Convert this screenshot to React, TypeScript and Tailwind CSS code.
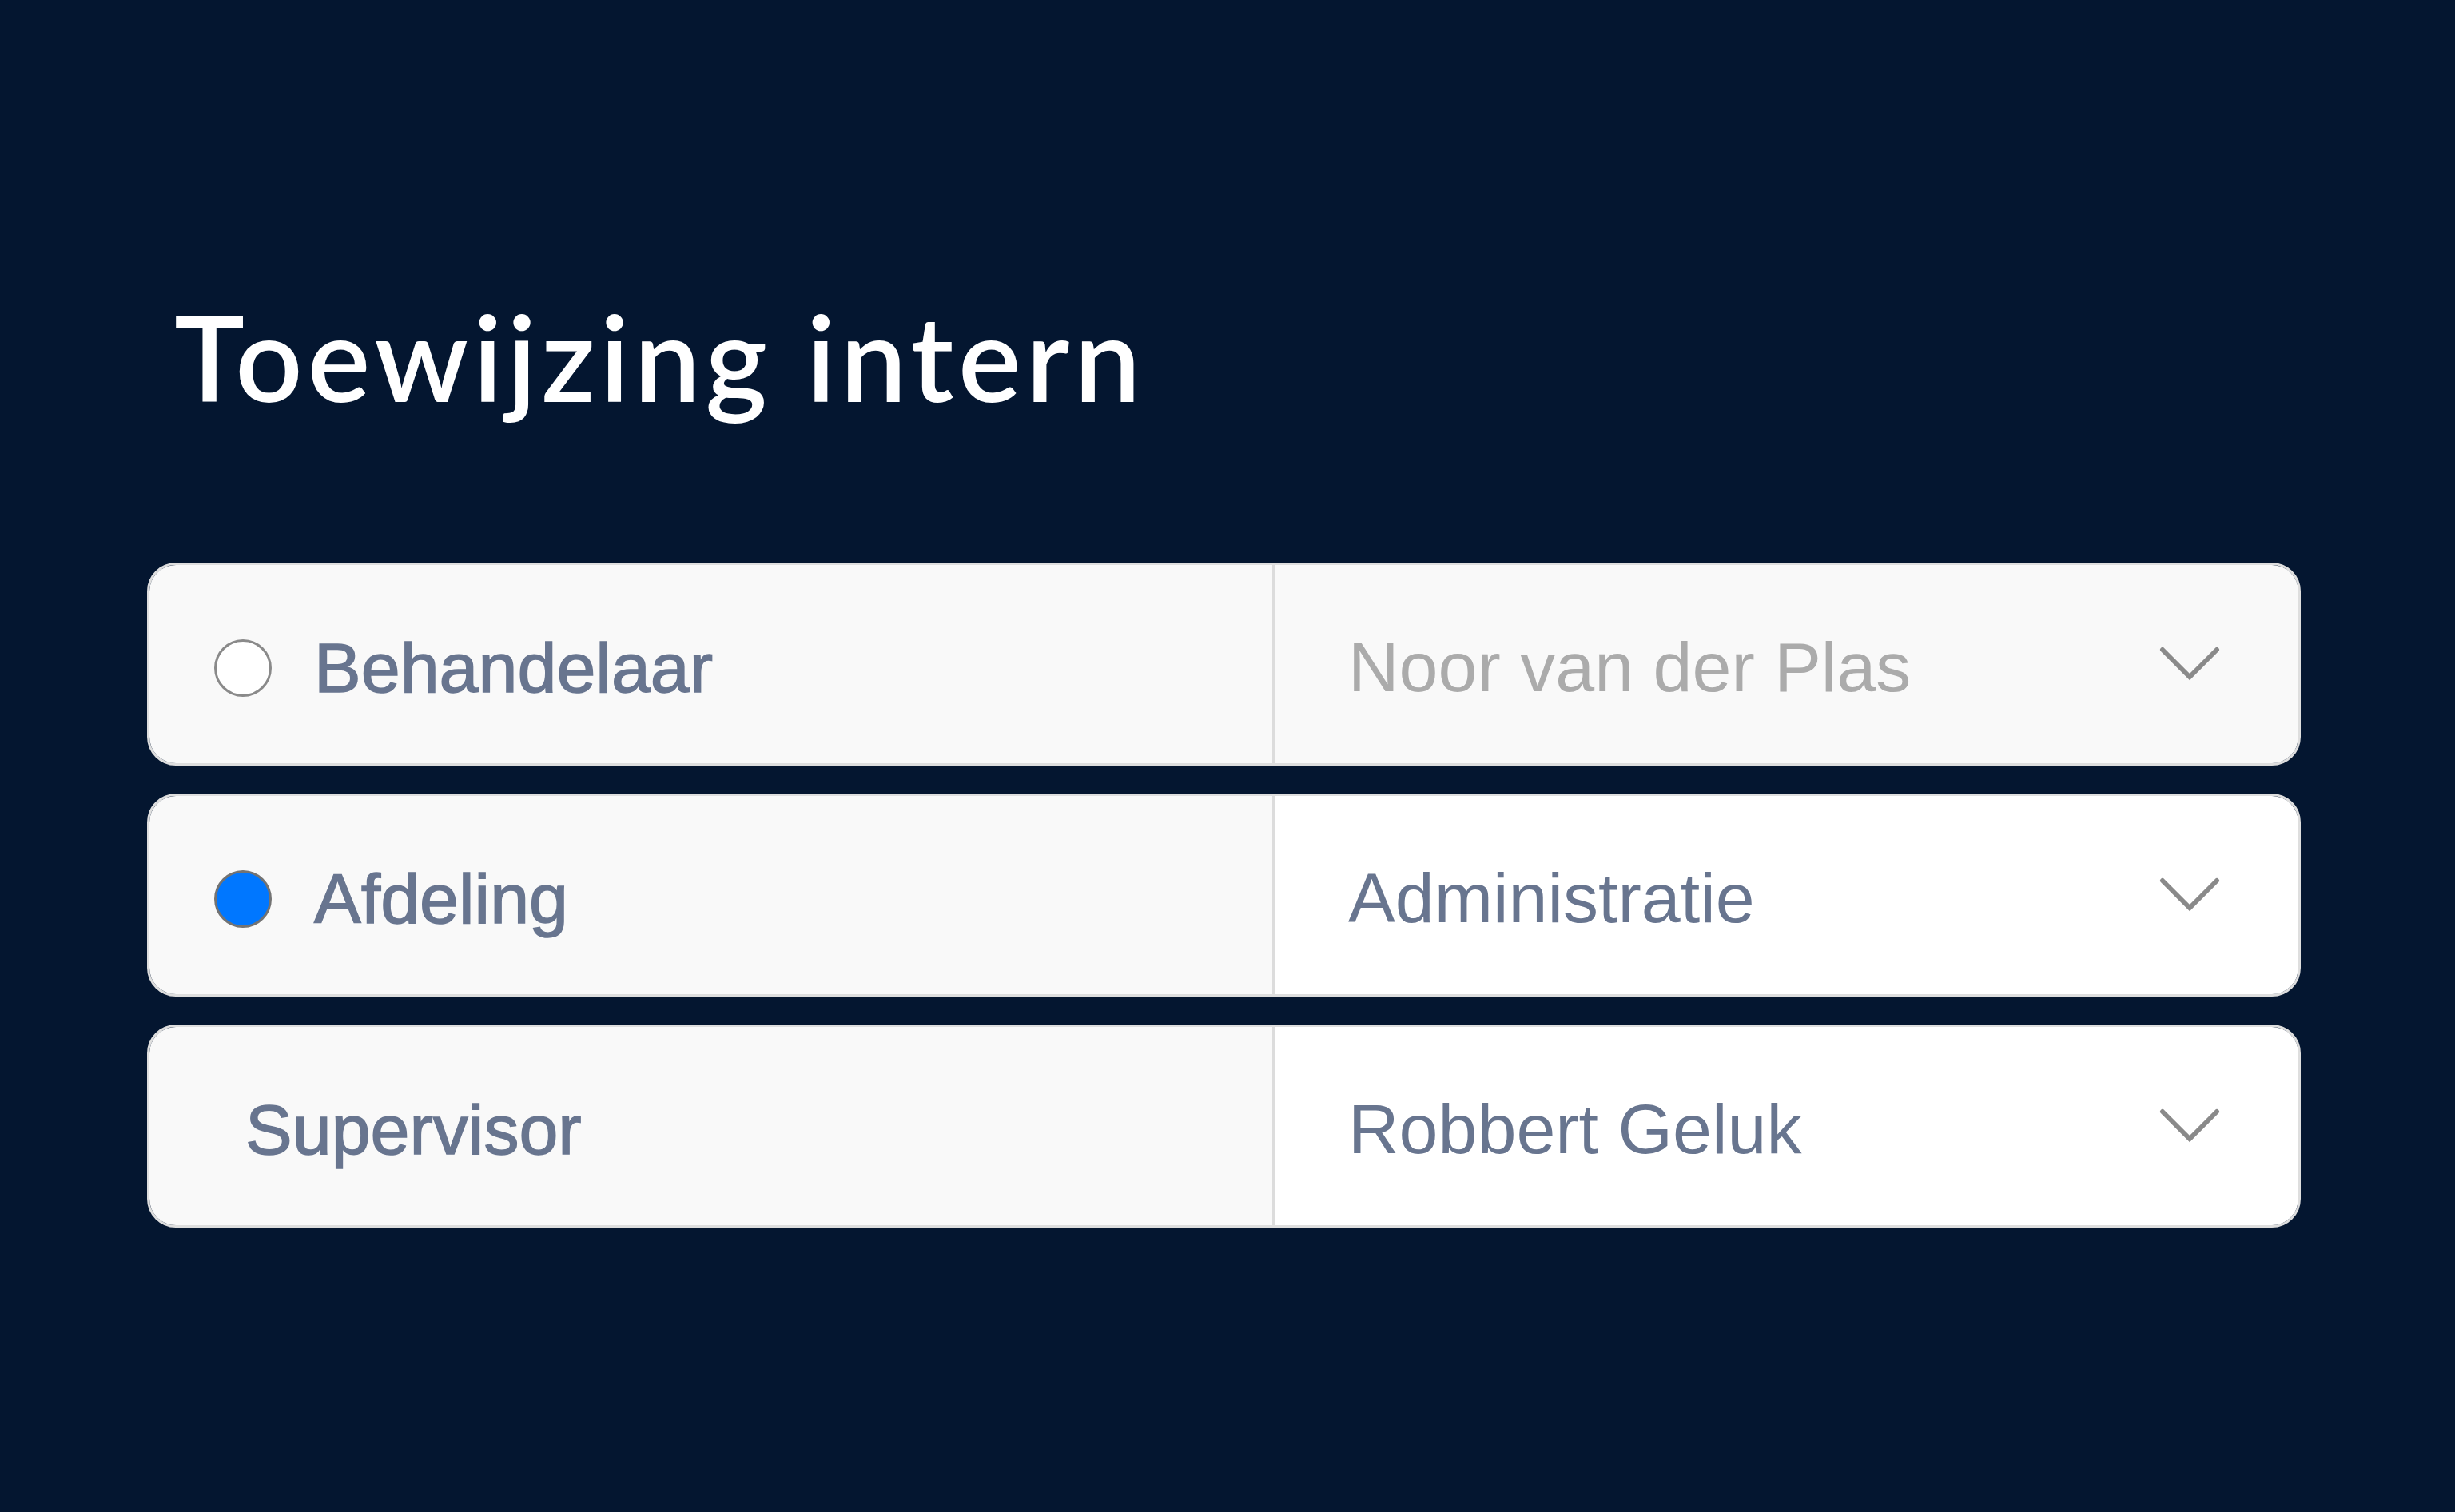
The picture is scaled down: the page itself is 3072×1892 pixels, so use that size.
import { useState } from 'react'

type Row = {
  label: string
  value: string
  radio?: boolean
  disabled?: boolean
}

const rows: Row[] = [
  { label: 'Behandelaar', value: 'Noor van der Plas', radio: true, disabled: true },
  { label: 'Afdeling', value: 'Administratie', radio: true },
  { label: 'Supervisor', value: 'Robbert Geluk' },
]

function Chevron() {
  return (
    <svg width="76" height="44" viewBox="0 0 76 44" fill="none">
      <polyline
        points="4,4 38,38 72,4"
        stroke="#8a8a8a"
        strokeWidth="6"
        strokeLinecap="round"
        strokeLinejoin="miter"
      />
    </svg>
  )
}

function AssignRow({ row, selected, onSelect }: { row: Row; selected: boolean; onSelect: () => void }) {
  return (
    <div className="flex h-[254px] rounded-[36px] border-[3px] border-[#dedede] overflow-hidden">
      {/* Label side */}
      <div
        className={`w-[1408px] shrink-0 bg-[#f9f9f9] border-r-[3px] border-[#dcdcdc] flex items-center pt-[9px] ${
          row.radio ? 'pl-[81px]' : 'pl-[120px]'
        }`}
      >
        {row.radio && (
          <button
            onClick={onSelect}
            className={`w-[72px] h-[72px] rounded-full border-[3px] mr-[53px] shrink-0 ${
              selected ? 'bg-[#0077ff] border-[#737373]' : 'bg-white border-[#8a8a8a]'
            }`}
          />
        )}
        <span className="text-[88px] text-[#68758f] [-webkit-text-stroke:1.5px_#68758f]">{row.label}</span>
      </div>

      {/* Select side */}
      <div
        className={`flex-1 flex items-center justify-between pl-[92px] pr-[98px] ${
          row.disabled ? 'bg-[#f9f9f9]' : 'bg-white'
        }`}
      >
        <span className={`mt-[8px] text-[88px] ${row.disabled ? 'text-[#ababab]' : 'text-[#68758f]'}`}>
          {row.value}
        </span>
        <Chevron />
      </div>
    </div>
  )
}

export default function App() {
  const [selected, setSelected] = useState(1)

  return (
    <div
      className="w-[3072px] h-[1892px] bg-[#041630] pt-[372px] pl-[184px] pr-[193px]"
      style={{ fontFamily: '"Liberation Sans", Arial, sans-serif' }}
    >
      <h1 className="pl-[34px] text-white text-[148px] leading-none font-semibold tracking-[6px] font-['Lato',sans-serif]">
        Toewijzing intern
      </h1>

      <div className="mt-[184px] flex flex-col gap-[35px]">
        {rows.map((row, i) => (
          <AssignRow key={row.label} row={row} selected={selected === i} onSelect={() => setSelected(i)} />
        ))}
      </div>
    </div>
  )
}
